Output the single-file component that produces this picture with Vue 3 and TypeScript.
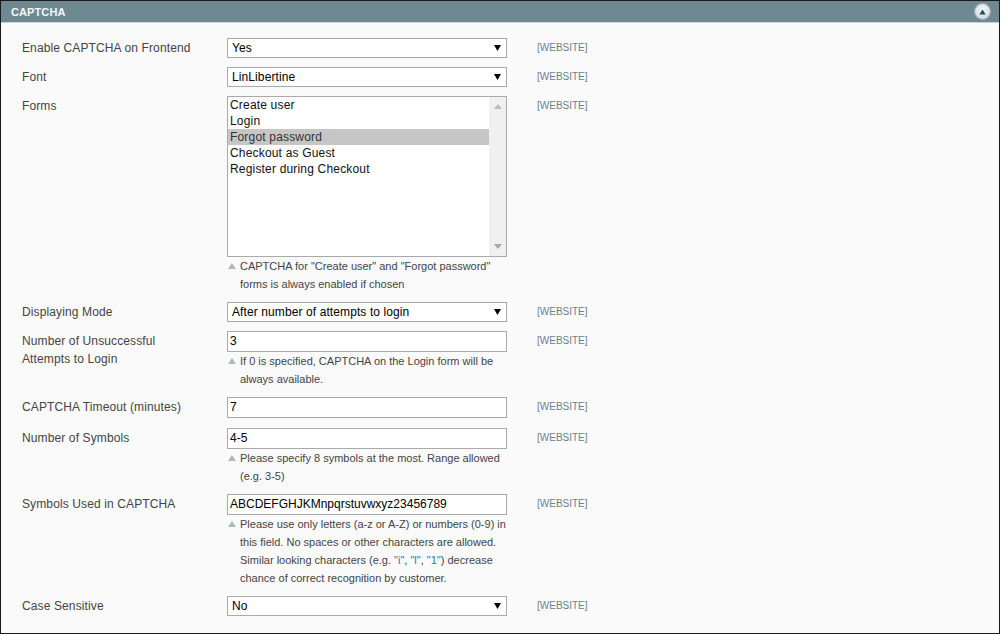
<script setup lang="ts">
interface Row {
  label: string[];
  type: "select" | "input" | "list";
  value?: string;
  hint?: string[];
  gap?: boolean;
}

const rows: Row[] = [
  { label: ["Enable CAPTCHA on Frontend"], type: "select", value: "Yes" },
  { label: ["Font"], type: "select", value: "LinLibertine" },
  {
    label: ["Forms"],
    type: "list",
    hint: ['CAPTCHA  for "Create user" and "Forgot password"', "forms is always enabled if chosen"],
  },
  { label: ["Displaying Mode"], type: "select", value: "After number of attempts to login" },
  {
    label: ["Number of Unsuccessful", "Attempts to Login"],
    type: "input",
    value: "3",
    hint: ["If 0 is specified, CAPTCHA on the Login form will be", "always available."],
  },
  { label: ["CAPTCHA Timeout (minutes)"], type: "input", value: "7", gap: true },
  {
    label: ["Number of Symbols"],
    type: "input",
    value: "4-5",
    hint: ["Please specify 8 symbols at the most. Range allowed", "(e.g. 3-5)"],
  },
  {
    label: ["Symbols Used in CAPTCHA"],
    type: "input",
    value: "ABCDEFGHJKMnpqrstuvwxyz23456789",
    hint: [
      "Please use only letters (a-z or A-Z) or numbers (0-9) in",
      "this field. No spaces or other characters are allowed.",
      "__similar__",
      "chance of correct recognition by customer.",
    ],
  },
  { label: ["Case Sensitive"], type: "select", value: "No" },
];

const forms = ["Create user", "Login", "Forgot password", "Checkout as Guest", "Register during Checkout"];
</script>

<template>
  <div class="panel">
    <header class="panel__head">
      <span class="panel__title">CAPTCHA</span>
      <span class="collapse">
        <svg viewBox="0 0 10 8" width="10" height="8"><path d="M5 0.5L9.5 7.5H0.5Z" fill="#1f4a5c" /></svg>
      </span>
    </header>

    <div class="panel__body">
      <div v-for="row in rows" :key="row.label[0]" class="row" :class="{ 'row--gap': row.gap }">
        <div class="row__label">
          <div v-for="line in row.label" :key="line">{{ line }}</div>
        </div>

        <div class="row__control">
          <div v-if="row.type === 'select'" class="select">
            <span>{{ row.value }}</span>
            <svg viewBox="0 0 7 6" width="7" height="6"><path d="M0 0H7L3.5 6Z" fill="#000" /></svg>
          </div>

          <div v-else-if="row.type === 'input'" class="input">{{ row.value }}</div>

          <div v-else class="list">
            <div class="list__items">
              <div
                v-for="item in forms"
                :key="item"
                class="list__item"
                :class="{ 'list__item--on': item === 'Forgot password' }"
              >
                {{ item }}
              </div>
            </div>
            <div class="list__bar">
              <svg viewBox="0 0 8 5" width="8" height="5"><path d="M4 0L8 5H0Z" fill="#bcbcbc" /></svg>
              <svg viewBox="0 0 8 5" width="8" height="5"><path d="M0 0H8L4 5Z" fill="#a8a8a8" /></svg>
            </div>
          </div>

          <div v-if="row.hint" class="hint">
            <svg class="hint__mark" viewBox="0 0 8 6" width="8" height="6"><path d="M4 0L8 6H0Z" fill="#a9bcc4" /></svg>
            <div v-for="line in row.hint" :key="line" class="hint__line">
              <template v-if="line === '__similar__'">
                Similar looking characters (e.g. <span class="hint__em">"i"</span>,
                <span class="hint__em">"l"</span>, <span class="hint__em">"1"</span>) decrease
              </template>
              <template v-else>{{ line }}</template>
            </div>
          </div>
        </div>

        <div class="row__scope">[WEBSITE]</div>
      </div>
    </div>
  </div>
</template>

<style>
html,
body {
  margin: 0;
  background: #fff;
}
</style>

<style scoped>
.panel {
  box-sizing: border-box;
  width: 1000px;
  height: 634px;
  border: 1px solid #1a1a1a;
  background: #fafafa;
  font-family: "Liberation Sans", Arial, sans-serif;
  overflow: hidden;
}

.panel__head {
  display: flex;
  align-items: center;
  justify-content: space-between;
  height: 21px;
  padding: 0 9px 0 10px;
  background: #6f8992;
  border-bottom: 1px solid #c9d3d6;
}

.panel__title {
  font-size: 11px;
  font-weight: 700;
  letter-spacing: 0.1px;
  color: #f4f7f8;
}

.collapse {
  display: flex;
  align-items: center;
  justify-content: center;
  width: 15px;
  height: 15px;
  border-radius: 50%;
  background: radial-gradient(circle at 50% 35%, #f2f6f7, #c9d6da);
  box-shadow: 0 0 0 1px #9db0b6;
}

.collapse svg {
  width: 7px;
  height: 6px;
}

.panel__body {
  padding: 15px 0 0 21px;
}

.row {
  display: flex;
  align-items: flex-start;
  margin-bottom: 9px;
  font-size: 12px;
  color: #444;
}

.row--gap {
  margin-bottom: 10px;
}

.row__label {
  flex: 0 0 205px;
  line-height: 18px;
  padding-top: 1px;
  letter-spacing: 0.12px;
}

.row__control {
  flex: 0 0 280px;
  width: 280px;
}

.row__scope {
  margin-left: 30px;
  font-size: 10px;
  line-height: 18px;
  padding-top: 1px;
  color: #6b8190;
}

.select,
.input,
.list {
  box-sizing: border-box;
  border: 1px solid #aaa;
  background: #fff;
  color: #000;
}

.select {
  display: flex;
  align-items: center;
  justify-content: space-between;
  height: 20px;
  padding: 0 5px 0 4px;
  letter-spacing: 0.1px;
}

.input {
  height: 21px;
  line-height: 19px;
  padding: 0 2px;
}

.list {
  display: flex;
  height: 161px;
}

.list__items {
  flex: 1;
}

.list__item {
  height: 16px;
  line-height: 16px;
  padding-left: 2px;
  color: #111;
  letter-spacing: 0.18px;
}

.list__item--on {
  background: #c6c6c6;
  color: #333;
}

.list__bar {
  flex: 0 0 17px;
  display: flex;
  flex-direction: column;
  justify-content: space-between;
  align-items: center;
  padding: 7px 0;
  box-sizing: border-box;
  background: #f0f0f0;
}

.hint {
  position: relative;
  padding: 0 0 0 13px;
  font-size: 11px;
  color: #444;
}

.hint__mark {
  position: absolute;
  left: 1px;
  top: 6px;
}

.hint__line {
  height: 18px;
  line-height: 18px;
  white-space: nowrap;
}

.hint__em {
  color: #3d6fb4;
}
</style>
